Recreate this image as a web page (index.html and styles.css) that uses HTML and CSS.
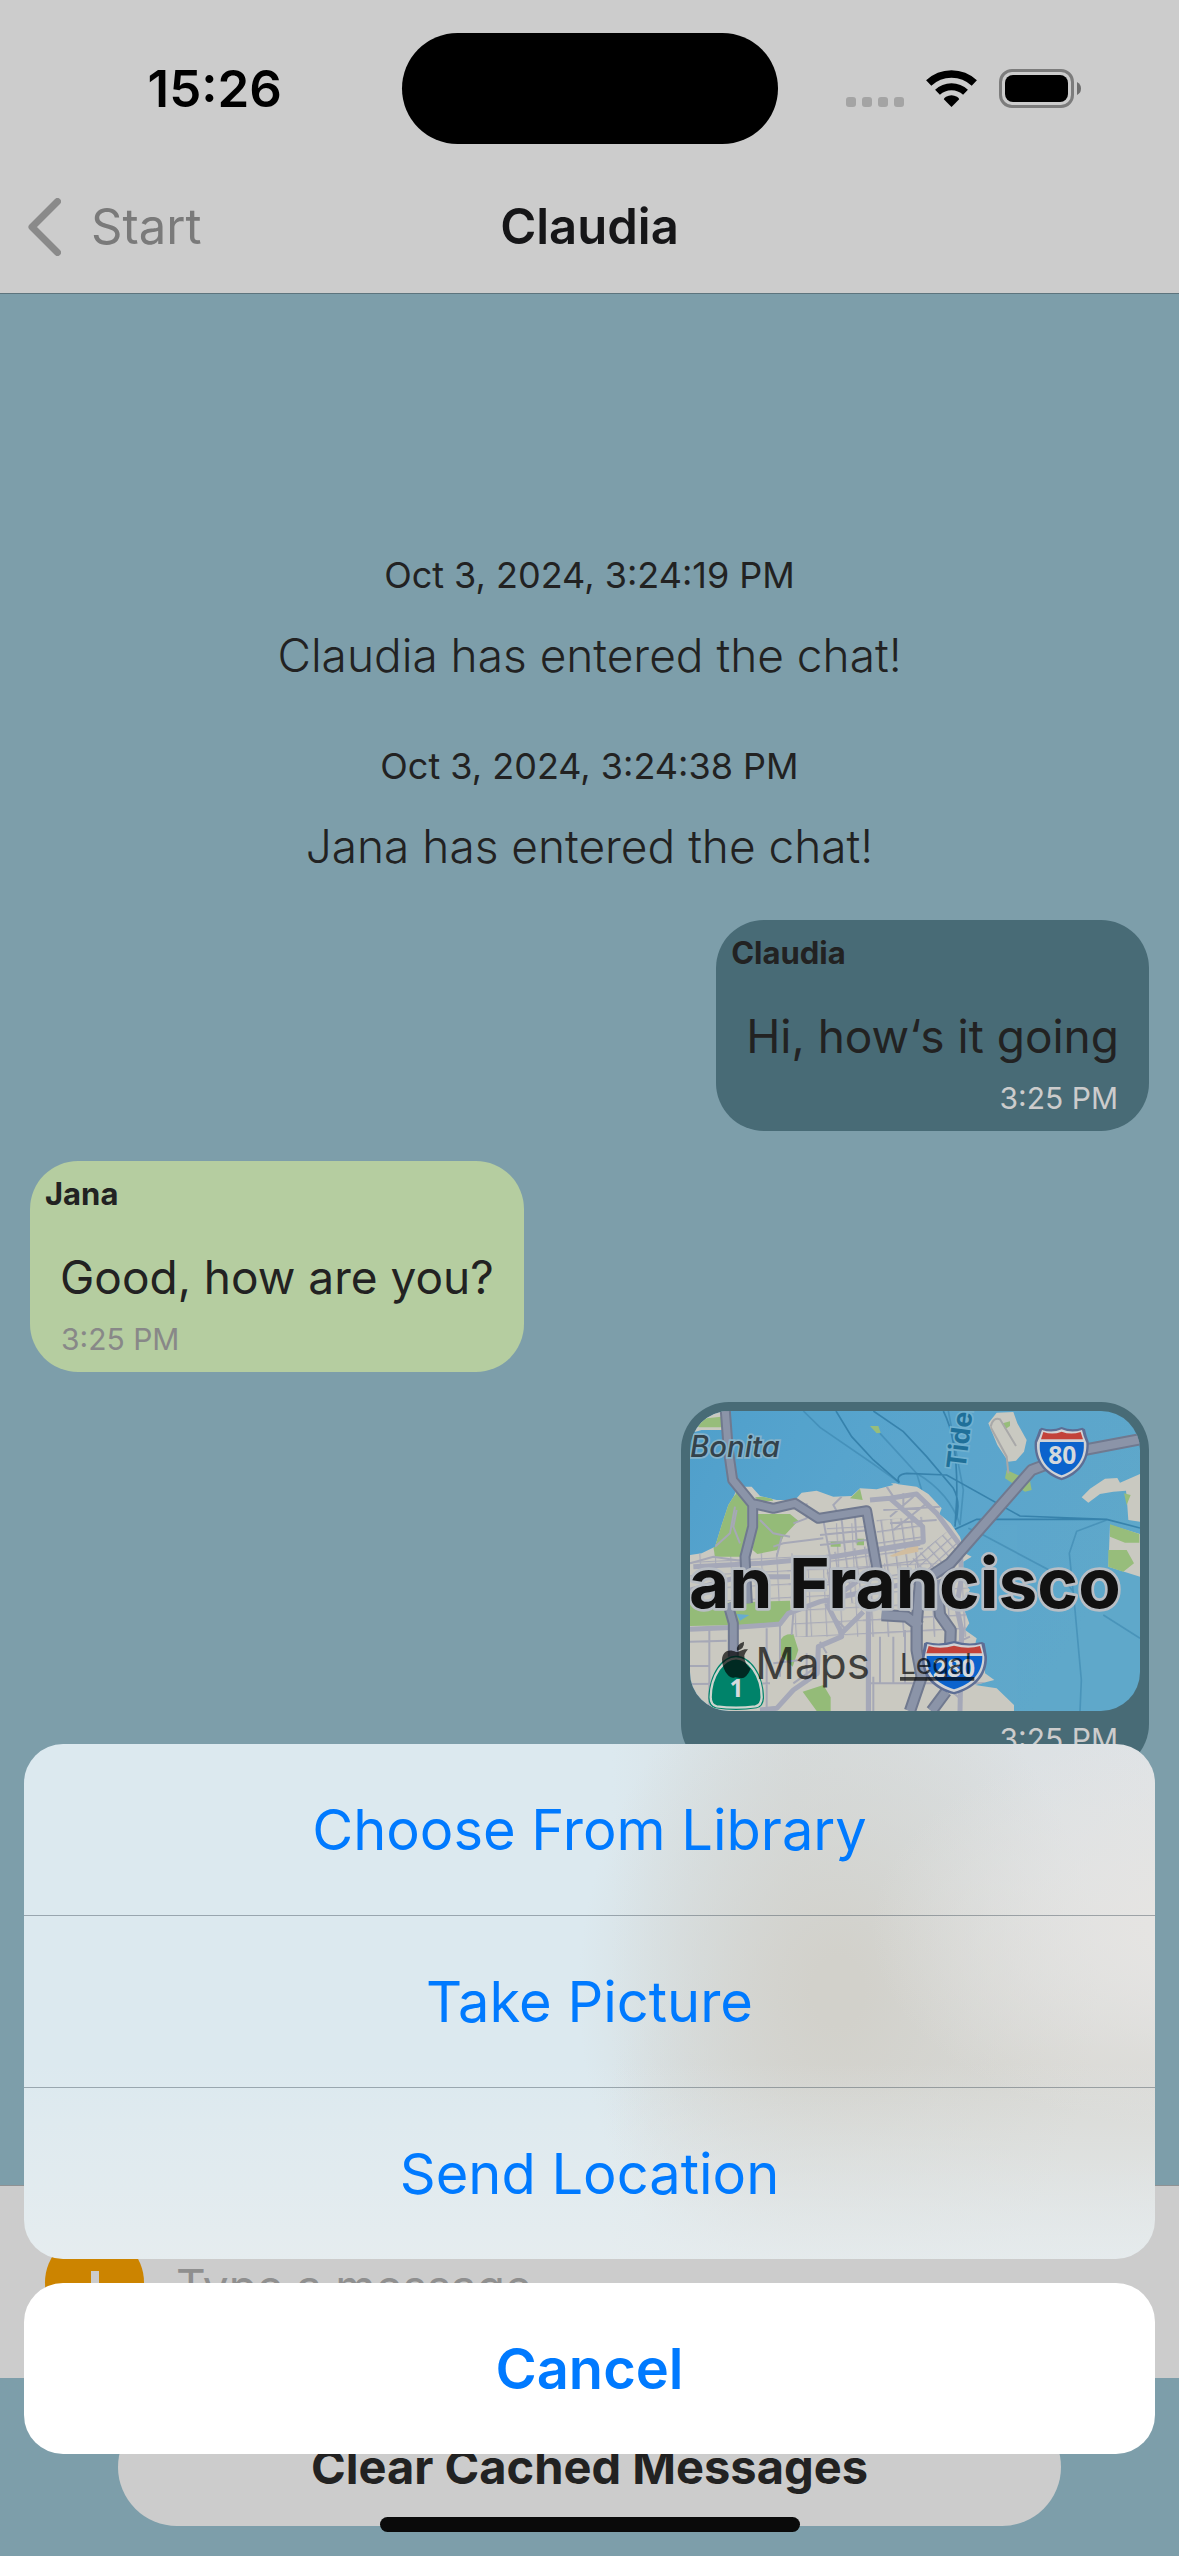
FILE: index.html
```html
<!DOCTYPE html>
<html lang="en">
<head>
<meta charset="utf-8">
<meta name="viewport" content="width=device-width, initial-scale=1">
<title>Claudia</title>
<link rel="stylesheet" href="styles.css">
</head>
<body>
<div class="screen">
  <header class="header">
    <div class="status">
      <time class="clock">15:26</time>
      <div class="island"></div>
      <div class="indicators">
        <svg class="signal" viewBox="0 0 58 10" aria-hidden="true"><rect width="10" height="10" rx="3"/><rect x="16" width="10" height="10" rx="3"/><rect x="32" width="10" height="10" rx="3"/><rect x="48" width="10" height="10" rx="3"/></svg>
        <svg class="wifi" viewBox="0 0 51 37" aria-hidden="true"><path d="M2.7 13.1A33.2 33.2 0 0 1 48.300 13.100" fill="none" stroke="#000" stroke-width="7.600"/><path d="M11.500 22.300A20.300 20.300 0 0 1 39.500 22.300" fill="none" stroke="#000" stroke-width="7"/><path d="M25.500 37L17.800 29.300Q18 28 20 26.800Q25.500 23.600 31 26.800Q33 28 33.200 29.300Z"/></svg>
        <svg class="battery" viewBox="0 0 82 39" aria-hidden="true"><rect x="1.500" y="1.500" width="72" height="36" rx="11.500" fill="none" stroke="#7c7c7c" stroke-width="3"/><rect x="6" y="6" width="63" height="27" rx="8"/><path d="M78 13Q82 15 82 19.500Q82 24 78 26Z" fill="#6e6e6e"/></svg>
      </div>
    </div>
    <nav class="nav">
      <button class="back" type="button">
        <svg class="chevron" viewBox="0 0 33 58" aria-hidden="true"><path d="M29.500 3.500L4 29L29.500 54.500" fill="none" stroke="#8a8a8a" stroke-width="7" stroke-linecap="round" stroke-linejoin="round"/></svg>
        <span>Start</span>
      </button>
      <h1 class="title">Claudia</h1>
    </nav>
  </header>

  <main class="messages">
    <div class="system">
      <time class="system-date">Oct 3, 2024, 3:24:19 PM</time>
      <p class="system-text">Claudia has entered the chat!</p>
    </div>
    <div class="system">
      <time class="system-date">Oct 3, 2024, 3:24:38 PM</time>
      <p class="system-text">Jana has entered the chat!</p>
    </div>
    <article class="bubble sent">
      <h2 class="name">Claudia</h2>
      <p class="text">Hi, how‘s it going</p>
      <time class="stamp">3:25 PM</time>
    </article>
    <article class="bubble received">
      <h2 class="name">Jana</h2>
      <p class="text">Good, how are you?</p>
      <time class="stamp">3:25 PM</time>
    </article>
    <article class="bubble sent location">
      <svg class="map" viewBox="90 63 1350 900" role="img" aria-label="Map of San Francisco">
        <defs>
          <linearGradient id="sea" x1="0" y1="0" x2="1" y2="0.4">
            <stop offset="0" stop-color="#4f9fcb"/><stop offset="0.35" stop-color="#58a5ce"/><stop offset="1" stop-color="#60a8ca"/>
          </linearGradient>
          <pattern id="grid" width="46" height="40" patternUnits="userSpaceOnUse" patternTransform="rotate(-3)">
            <path d="M0 0H46M0 0V40" stroke="#a9abb8" stroke-width="7" fill="none"/>
          </pattern>
          <pattern id="fine" width="30" height="34" patternUnits="userSpaceOnUse" patternTransform="rotate(-8)">
            <path d="M0 0H30M0 0V34" stroke="#a5a7b6" stroke-width="9" fill="none"/>
          </pattern>
          <pattern id="diag" width="28" height="24" patternUnits="userSpaceOnUse" patternTransform="rotate(-42)">
            <path d="M0 0H28M0 0V24" stroke="#a5a7b6" stroke-width="8" fill="none"/>
          </pattern>
          <clipPath id="land"><path d="M90 495L125 490 165 470 185 405 205 345 222 318 232 290 275 290 300 318 350 330 405 330 425 308 470 302 520 320 575 318 600 295 650 298 700 285 675 265 715 283 770 290 805 312 845 355 838 372 872 400 900 440 915 490 935 500 910 515 910 575 930 600 905 640 928 700 915 720 950 745 945 765 975 780 975 850 1003 870 945 885 1010 895 1062 945 1062 963H90Z"/></clipPath>
        </defs>
        <rect x="90" y="63" width="1350" height="900" fill="url(#sea)"/>
        <g fill="none" stroke="#347fa9" stroke-width="5" opacity="0.9">
          <path d="M528 63L575 140 640 210 718 278M640 63L730 125 800 200 880 295Q905 340 885 400M718 278Q705 255 740 250L860 255 1080 378 1340 388 1440 414M885 418L950 388 1340 388M850 63Q895 150 890 330L885 410"/>
          <path d="M430 63L480 112 640 222 718 278M660 130L770 250 785 300M770 250Q870 310 900 405L910 300 865 63M925 415L960 430 1205 560 1240 605M1330 675L1440 745M1340 390L1250 424 1228 490 1245 660 1264 870 1260 963" opacity="0.55"/>
        </g>
        <g fill="#c9c9c1">
          <path d="M90 130L108 110 145 78 180 63H200V120H125Z"/>
          <path d="M985 100L1010 68 1060 66 1072 100 1100 150 1092 185 1068 212 1045 215 1012 165Z"/>
          <path d="M1265 322L1290 296 1335 266 1372 264 1380 278 1440 252V318L1440 395 1405 390 1400 320 1398 302 1360 305 1320 312 1285 338Z"/>
          <path d="M1350 405L1440 432V560L1345 530Z"/>
        </g>
        <g fill="#97bd7b">
          <path d="M100 105L140 85 183 80 183 112H118Z"/><path d="M1040 240L1110 272 1115 300 1095 305 1035 265Z"/><path d="M630 108L655 108 662 128 650 130Z"/><path d="M1345 480L1400 480 1422 520 1390 545 1345 530ZM1350 403L1438 432V458L1395 458 1350 440ZM1392 310L1412 315 1400 345ZM1028 100L1050 94 1050 108 1035 118Z"/>
        </g>
        <path d="M992 110Q1000 80 1020 88L1068 168M992 112L1040 200 1045 250" fill="none" stroke="#a8a8a8" stroke-width="6"/>
        <g clip-path="url(#land)">
          <rect x="90" y="280" width="1000" height="690" fill="#cac9c1"/>
          <path d="M380 520H930V740H400Z" fill="url(#grid)"/>
          <path d="M90 490H400V650H90ZM500 400H640V520H500ZM600 650H930V740H620Z" fill="url(#grid)"/>
          <path d="M500 490L780 440 800 520 640 640 500 640ZM650 390L790 380V450L650 470Z" fill="url(#fine)"/>
          <path d="M740 520L860 425 915 470 880 540 830 580Z" fill="url(#diag)"/>
          <g fill="#94bb78">
            <path d="M160 470L180 400 210 330 230 310 262 345 262 500H165ZM290 372H390L415 392 370 440 352 480 292 492 278 480Z"/>
            <path d="M90 642L390 632 392 665 365 702 90 708ZM358 760Q365 730 400 732L415 780 398 830 362 795ZM428 905L490 885 512 922V963H470ZM225 305L260 330 235 330ZM285 322L330 318 340 332 300 335ZM570 325L600 296 608 330ZM512 455H542V470H512ZM590 446H612V466H590Z"/>
          </g>
          <path d="M688 498L775 460V485L700 500Z" fill="#d1bd9f"/>
          <path d="M230 672L268 675 240 692Z" fill="#67acd0"/>
          <g fill="none" stroke="#a6a8b6" stroke-width="6">
            <path d="M90 755L200 752M148 720V963M90 828H150M90 882L330 880M320 715V963M360 705V860M400 670L395 735M440 660V740M90 520L160 500 240 512M90 600L200 585M365 440L350 500M400 400L440 385 440 340M490 390L510 500 510 640M545 320L520 345 545 390M630 420L480 435M480 465L620 450M340 470L370 460 490 445M340 820L420 810M440 790V880M400 880L470 830M660 740V880M700 740V880M735 720V880M760 320L690 380M730 310V350M680 290L700 320M800 340L700 420M670 360L840 350M690 400L830 390M545 390L555 480M585 380L590 460M230 360L220 410 240 460M300 390L340 430 390 440M165 470L210 430 225 350M625 880H975M630 700V963M520 680L560 720M930 740L840 780M905 930L860 890M640 860L640 963M480 755L500 790"/>
          </g>
          <g fill="none" stroke="#a5a8b8" stroke-width="15" stroke-linejoin="round">
            <path d="M90 718L230 712 360 702 385 670 480 635 640 600 800 570M100 530L300 520 520 500 790 455 788 410 690 325 630 330M690 325L770 312 830 370 900 465 905 560 890 650 905 720 900 963M500 640L540 720 545 740 475 770 472 850 400 900 350 955 300 960M610 665L545 730M610 560L500 640M625 640V963M650 480L780 460M90 600L240 560 390 560"/>
          </g>
        </g>
        <g fill="none" stroke-linejoin="round">
          <g stroke="#70798f">
            <path d="M196 63L205 180 218 270 275 340 340 355 405 340 475 385 620 362 655 560M278 345L278 410 255 500 262 640M203 640L220 700V800" stroke-width="33"/>
            <path d="M1440 148L1280 178 1115 240 870 520 780 580 770 700 770 780 785 860 750 963M665 675L740 680 780 710M830 570L840 675 872 720 870 780M858 905L815 963" stroke-width="37"/>
          </g>
          <g stroke="#8b94a8">
            <path d="M196 63L205 180 218 270 275 340 340 355 405 340 475 385 620 362 655 560M278 345L278 410 255 500 262 640M203 640L220 700V800" stroke-width="21"/>
            <path d="M1440 148L1280 178 1115 240 870 520 780 580 770 700 770 780 785 860 750 963M665 675L740 680 780 710M830 570L840 675 872 720 870 780M858 905L815 963" stroke-width="25"/>
          </g>
        </g>
        <text class="map-water" transform="translate(916 240) rotate(-83)">Tider</text>
        <text class="map-place" x="90" y="202">Bonita</text>
        <g>
          <path d="M1145 113Q1175 124 1205 111Q1235 124 1267 113L1275 118Q1278 135 1286 155C1290 215 1255 255 1205 271C1155 255 1120 215 1124 155Q1132 135 1138 118Z" fill="#5d6e95"/>
          <path d="M1146 120Q1176 130 1205 118Q1234 130 1266 120Q1270 140 1279 158C1282 210 1252 247 1205 263C1158 247 1128 210 1131 158Q1140 140 1146 120Z" fill="#d0d2d5"/>
          <path d="M1150 126Q1178 136 1205 125Q1232 136 1262 126L1269 148H1143Z" fill="#c3423a"/>
          <path d="M1140 156H1271C1276 205 1250 240 1205 256C1160 240 1134 205 1140 156Z" fill="#0b63cd"/>
        </g>
        <text class="map-road" x="1207" y="222">80</text>
        <text class="map-city" x="1382" y="655">an Francisco</text>
        <path d="M800 756Q840 766 882 753Q925 766 966 756L974 760 981 800C983 860 940 898 882 913C822 898 783 860 786 800L792 760Z" fill="#5d6e95"/>
        <path d="M802 762Q842 772 882 760Q924 772 964 762L973 800C975 855 937 890 882 906C828 890 790 855 794 800Z" fill="#d0d2d5"/>
        <path d="M806 768Q842 779 882 767Q924 779 960 768L966 790H799Z" fill="#c3423a"/>
        <path d="M800 798H967C968 850 934 882 882 898C832 882 798 850 800 798Z" fill="#0b63cd"/>
        <text class="map-road" x="882" y="860">280</text>
        <path d="M228 797C270 797 312 850 312 925Q310 952 290 955Q228 965 166 955Q146 950 145 925C147 850 186 797 228 797Z" fill="#00836a"/>
        <path d="M228 805C265 805 305 855 305 922Q304 946 286 949Q228 957 170 949Q152 945 152 922C153 855 192 805 228 805Z" fill="none" stroke="#cfd5cf" stroke-width="7"/>
        <text class="map-road" x="230" y="921">1</text>
        <g fill="#000" opacity="0.68">
          <path d="M228 786C238 786 248 775 264 778Q258 784 253 796Q252 822 272 836Q260 864 244 865C236 865 230 860 222 863C205 868 186 835 186 808C188 782 208 776 228 786ZM231 782Q228 762 252 755Q254 777 231 782Z"/>
          <text class="map-brand" x="286" y="866">Maps</text>
          <text class="map-legal" x="720" y="853">Legal</text>
          <path d="M720 861H943V872H720Z"/>
        </g>
      </svg>
      <time class="stamp">3:25 PM</time>
    </article>
  </main>

  <form class="composer">
    <button class="add" type="button" aria-label="More actions"><svg viewBox="0 0 36 36" aria-hidden="true"><path d="M18 0V36M0 18H36" stroke="#ccc" stroke-width="8"/></svg></button>
    <input class="field" type="text" placeholder="Type a message" aria-label="Message">
  </form>
  <footer class="footer">
    <button class="clear" type="button">Clear Cached Messages</button>
  </footer>

  <div class="sheet" role="dialog" aria-label="Attachment options">
    <div class="options">
      <button class="option" type="button">Choose From Library</button>
      <button class="option" type="button">Take Picture</button>
      <button class="option" type="button">Send Location</button>
    </div>
    <button class="cancel" type="button">Cancel</button>
  </div>
  <div class="home-indicator"></div>
</div>
</body>
</html>
```
FILE: styles.css
```css
* { box-sizing: border-box; }

body {
  margin: 0;
  background: #7d9eaa;
  color: #222;
  font-family: Inter, "Liberation Sans", sans-serif;
}

button, input {
  margin: 0;
  padding: 0;
  border: 0;
  background: none;
  font: inherit;
  color: inherit;
}

h1, h2, p { margin: 0; }

svg { display: block; }

.screen {
  position: relative;
  display: flex;
  flex-direction: column;
  min-height: 100vh;
  overflow: hidden;
}

/* Header */
.header {
  background: #ccc;
  border-bottom: 1px solid #5d747d;
}

.status {
  display: grid;
  grid-template-columns: 1fr 376px 1fr;
  align-items: center;
  padding: 33px 0 16px;
}

.clock {
  padding-left: 28px;
  text-align: center;
  font-size: 51px;
  line-height: 60px;
  font-weight: 600;
  color: #000;
}

.island {
  height: 111px;
  border-radius: 56px;
  background: #000;
}

.indicators {
  display: flex;
  align-items: flex-end;
  gap: 22px;
  padding-left: 68px;
}

.signal { width: 58px; height: 10px; margin-bottom: 1px; fill: #a4a4a4; }
.wifi { width: 51px; height: 37px; margin-bottom: 1px; }
.battery { width: 82px; height: 39px; }

.nav {
  display: grid;
  grid-template-columns: 1fr auto 1fr;
  align-items: center;
  height: 133px;
  padding: 0 28px;
}

.back {
  display: flex;
  align-items: center;
  gap: 30px;
  font-size: 49px;
  line-height: 60px;
  color: #7a7a7a;
}

.chevron { width: 33px; height: 58px; }

.title {
  font-size: 49px;
  line-height: 60px;
  font-weight: 600;
  color: #161618;
}

/* Conversation */
.messages {
  flex: 1;
  display: flex;
  flex-direction: column;
  gap: 30px;
  padding: 244px 30px 30px;
}

.system {
  display: flex;
  flex-direction: column;
  align-items: center;
  gap: 27px;
  padding: 14px 0;
}

.system-date { font-size: 36px; line-height: 46px; }
.system-text { font-size: 46px; line-height: 60px; font-weight: 300; }

.bubble {
  display: flex;
  flex-direction: column;
  padding: 15px 0;
  border-radius: 48px;
}

.sent { align-self: flex-end; background: #486b76; }
.received { align-self: flex-start; background: #b5cda0; }

.name {
  padding: 0 15px;
  font-size: 31px;
  line-height: 36px;
  font-weight: 700;
}

.text {
  margin: 35px 0 14px;
  padding: 0 30px;
  font-size: 46px;
  line-height: 60px;
}

.stamp {
  padding: 0 31px;
  font-size: 30px;
  line-height: 36px;
}

.sent .stamp { align-self: flex-end; color: #ccc; }
.received .stamp { color: #888; }

.location { padding-top: 9px; }

.map {
  width: 450px;
  height: 300px;
  margin: 0 9px 10px;
  border-radius: 39px;
}

.map-city {
  font-size: 208px;
  font-weight: 700;
  text-anchor: end;
  fill: #111;
  stroke: #b9bec4;
  stroke-width: 16px;
  stroke-linejoin: round;
  paint-order: stroke;
}

.map-place {
  font-size: 88px;
  font-weight: 500;
  font-style: italic;
  fill: #33424b;
  stroke: #86b3ca;
  stroke-width: 10px;
  paint-order: stroke;
}

.map-water {
  font-size: 80px;
  font-weight: 700;
  fill: #1f7099;
  stroke: #70b1d0;
  stroke-width: 10px;
  paint-order: stroke;
}

.map-road {
  font-family: "Noto Sans", sans-serif;
  font-size: 74px;
  font-weight: 700;
  text-anchor: middle;
  fill: #d5d9dc;
}

.map-brand { font-size: 132px; }
.map-legal { font-size: 84px; }

/* Message composer */
.composer {
  display: flex;
  align-items: center;
  gap: 32px;
  height: 193px;
  padding: 0 45px;
  border-top: 1px solid #8f9294;
  background: #ccc;
}

.add {
  display: grid;
  place-items: center;
  flex: none;
  width: 99px;
  height: 99px;
  padding-top: 14px;
  border-radius: 50%;
  background: #cc8400;
}

.add svg { width: 36px; height: 36px; }

.field {
  flex: 1;
  min-width: 0;
  height: 100px;
  padding-top: 8px;
  font-size: 46px;
  line-height: 60px;
}

.field::placeholder { color: #8f8f8f; opacity: 1; }

.footer { padding: 30px 118px; }

.clear {
  display: block;
  width: 100%;
  height: 118px;
  border-radius: 59px;
  background: #ccc;
  font-size: 47px;
  line-height: 60px;
  font-weight: 700;
}

/* Action sheet */
.sheet {
  position: absolute;
  right: 24px;
  bottom: 102px;
  left: 24px;
  display: flex;
  flex-direction: column;
  gap: 24px;
  font-size: 56px;
  line-height: 72px;
  color: #007aff;
}

.options {
  display: flex;
  flex-direction: column;
  overflow: hidden;
  border-radius: 39px;
  background:
    linear-gradient(to bottom, transparent 62%, rgba(231, 237, 239, 0.85) 100%),
    radial-gradient(ellipse 330px 200px at 104% 36%, #e5e4e2 15%, transparent 100%),
    radial-gradient(ellipse 260px 340px at 72% 48%, #d2d1cb 10%, rgba(211, 211, 206, 0.6) 50%, transparent 100%),
    radial-gradient(ellipse 480px 230px at 94% 70%, #d8d8d4 25%, transparent 100%),
    linear-gradient(to right, #dce9ef 52%, #d7dddf 68%, #dfe3e6 100%);
}

.option { height: 171px; }

.option + .option {
  height: 172px;
  border-top: 1px solid rgba(60, 75, 85, 0.42);
}

.cancel {
  height: 171px;
  border-radius: 39px;
  background: #fff;
  font-weight: 600;
}

.home-indicator {
  position: absolute;
  bottom: 24px;
  left: 50%;
  width: 420px;
  height: 15px;
  margin-left: -210px;
  border-radius: 8px;
  background: #0a0a0a;
}
```
